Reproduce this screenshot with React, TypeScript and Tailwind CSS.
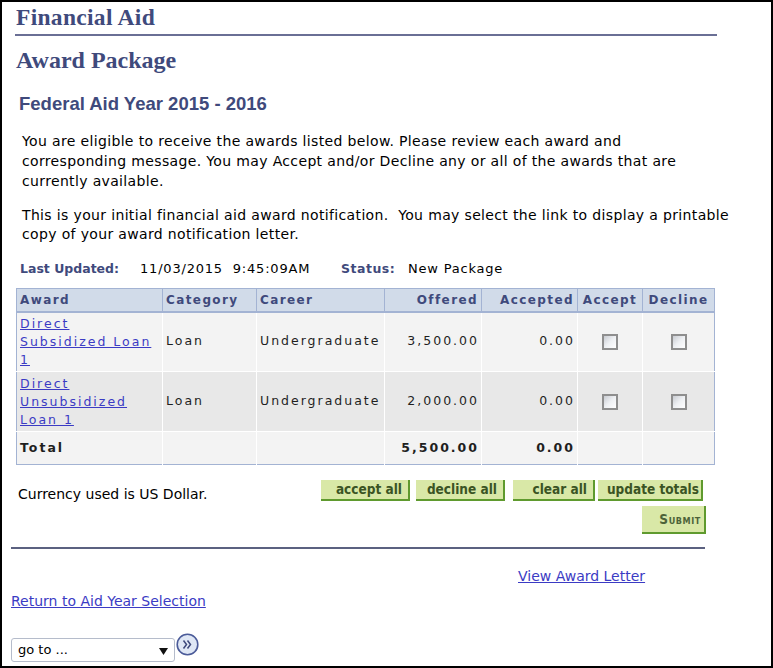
const navy = "text-[#3f4a7c]";

const body = { fontFamily: "'DejaVu Sans', Verdana, sans-serif" };
const serif = { fontFamily: "'Liberation Serif', 'Times New Roman', serif" };
const arial = { fontFamily: "'Liberation Sans', Arial, sans-serif" };
const cond = { fontFamily: "'DejaVu Sans Condensed', 'DejaVu Sans', sans-serif", fontStretch: "condensed" };

type Row = { award: string[]; offered: string; bg: string };

const rows: Row[] = [
  { award: ["Direct", "Subsidized Loan", "1"], offered: "3,500.00", bg: "bg-[#f3f3f3]" },
  { award: ["Direct", "Unsubsidized", "Loan 1"], offered: "2,000.00", bg: "bg-[#e8e8e8]" },
];

function Check() {
  return (
    <div className="mx-auto h-[16px] w-[16px] border-2 border-[#8e8e8e] bg-gradient-to-br from-[#c9ccd2] via-[#eef0f3] to-white" />
  );
}

function GreenButton({ label, w, className = "" }: { label: string; w: string; className?: string }) {
  return (
    <button
      className={`h-[21px] ${w} border-r-2 border-b-2 border-[#5f9a2e] bg-[#d9e8a7] pr-[6px] text-right text-[13.5px] font-bold leading-[19px] text-[#3b5424] ${className}`}
      style={cond}
    >
      {label}
    </button>
  );
}

export default function App() {
  return (
    <div className="h-[668px] w-[773px] overflow-hidden border-2 border-black bg-white" style={body}>
      <h1 className={`ml-[14px] mt-[3px] text-[23.5px] font-bold leading-[24px] tracking-[0.3px] ${navy}`} style={serif}>
        Financial Aid
      </h1>
      <div className="ml-[13px] mt-[5px] h-[2px] w-[702px] bg-[#6a6f95]" />
      <h2 className={`ml-[14px] mt-[10px] text-[24px] font-bold leading-[28px] ${navy}`} style={serif}>
        Award Package
      </h2>
      <h3 className={`ml-[17px] mt-[19px] text-[18.5px] font-bold leading-[22px] ${navy}`} style={arial}>
        Federal Aid Year 2015 - 2016
      </h3>

      <p className="ml-[20px] mt-[16px] whitespace-nowrap text-[14px] leading-[20px] tracking-[0.35px] text-black">
        You are eligible to receive the awards listed below. Please review each award and
        <br />
        corresponding message. You may Accept and/or Decline any or all of the awards that are
        <br />
        currently available.
      </p>
      <p className="ml-[20px] mt-[15px] whitespace-pre text-[14px] leading-[19px] tracking-[0.35px] text-black">
        {"This is your initial financial aid award notification.  You may select the link to display a printable"}
        <br />
        copy of your award notification letter.
      </p>

      <div className="ml-[18px] mt-[17px] flex text-[13px] leading-[16px]">
        <span className={`w-[120px] text-[12.5px] font-bold ${navy}`}>Last Updated:</span>
        <span className="w-[201px] whitespace-pre tracking-[0.8px] text-black">{"11/03/2015  9:45:09AM"}</span>
        <span className={`w-[67px] text-[12.5px] font-bold tracking-[0.5px] ${navy}`}>Status:</span>
        <span className="tracking-[0.8px] text-black">New Package</span>
      </div>

      <table className="ml-[14px] mt-[11px] w-[698px] table-fixed border-collapse border border-[#a3b3d3] text-[12.5px]">
        <colgroup>
          <col className="w-[146px]" />
          <col className="w-[94px]" />
          <col className="w-[128px]" />
          <col className="w-[97px]" />
          <col className="w-[96px]" />
          <col className="w-[65px]" />
          <col className="w-[72px]" />
        </colgroup>
        <thead>
          <tr className={`h-[23px] border-b-2 border-[#a3b3d3] bg-[#d1dbe9] text-[12px] font-bold tracking-[1.4px] ${navy}`}>
            <th className="border-r border-[#a3b3d3] px-[3px] text-left">Award</th>
            <th className="border-r border-[#a3b3d3] px-[3px] text-left">Category</th>
            <th className="border-r border-[#a3b3d3] px-[3px] text-left">Career</th>
            <th className="border-r border-[#a3b3d3] px-[3px] text-right">Offered</th>
            <th className="border-r border-[#a3b3d3] px-[3px] text-right">Accepted</th>
            <th className="border-r border-[#a3b3d3] px-0 text-center">Accept</th>
            <th className="px-0 text-center">Decline</th>
          </tr>
        </thead>
        <tbody className="tracking-[2px] text-[#1f1f1f]">
          {rows.map((r) => (
            <tr key={r.offered} className={`h-[60px] border-b border-white ${r.bg}`}>
              <td className="border-r border-white px-[3px] leading-[18px]">
                <a href="#" className="text-[#3b3bc4] underline">
                  {r.award.map((l, i) => (
                    <span key={i} className="block whitespace-nowrap">{l}</span>
                  ))}
                </a>
              </td>
              <td className="border-r border-white px-[3px]">Loan</td>
              <td className="border-r border-white px-[3px]">Undergraduate</td>
              <td className="border-r border-white pl-[3px] pr-[2px] text-right">{r.offered}</td>
              <td className="border-r border-white pl-[3px] pr-[2px] text-right">0.00</td>
              <td className="border-r border-white">
                <Check />
              </td>
              <td>
                <Check />
              </td>
            </tr>
          ))}
          <tr className="h-[33px] bg-[#f3f3f3] font-bold">
            <td className="border-r border-white px-[3px]">Total</td>
            <td className="border-r border-white" />
            <td className="border-r border-white" />
            <td className="border-r border-white pl-[3px] pr-[2px] text-right">5,500.00</td>
            <td className="border-r border-white pl-[3px] pr-[2px] text-right">0.00</td>
            <td className="border-r border-white" />
            <td />
          </tr>
        </tbody>
      </table>

      <div className="ml-[14px] mt-[15px] flex w-[687px] items-start justify-between">
        <span className="ml-[2px] mt-[6px] text-[14px] leading-[16px] text-black">Currency used is US Dollar.</span>
        <div className="flex flex-col items-end">
          <div className="flex">
            <GreenButton label="accept all" w="w-[89px]" />
            <GreenButton label="decline all" w="w-[89px]" className="ml-[6px]" />
            <GreenButton label="clear all" w="w-[82px]" className="ml-[8px]" />
            <GreenButton label="update totals" w="w-[105px]" className="ml-[3px] !pr-[2px]" />
          </div>
          <button
            className="mt-[5px] mr-[-3px] h-[28px] w-[64px] border-r-2 border-b-2 border-[#5f9a2e] bg-[#d9e8a7] pr-[3px] text-right text-[13.5px] font-bold tracking-[0.6px] text-[#4d6339]"
            style={{ ...cond, fontVariant: "small-caps" }}
          >
            Submit
          </button>
        </div>
      </div>

      <div className="ml-[9px] mt-[13px] h-[2px] w-[694px] bg-[#5b6180]" />

      <div className="ml-[516px] mt-[19px] text-[14px] leading-[16px]">
        <a href="#" className="text-[#3b3bc4] underline">View Award Letter</a>
      </div>
      <div className="ml-[9px] mt-[9px] text-[14px] leading-[16px]">
        <a href="#" className="text-[#3b3bc4] underline">Return to Aid Year Selection</a>
      </div>

      <div className="ml-[9px] mt-[16px] flex items-start">
        <div className="mt-[13px] flex h-[24px] w-[164px] items-center justify-between rounded-[3px] border border-[#b5bccb] bg-white pl-[6px] pr-[6px] text-[13px] text-black">
          <span>go to ...</span>
          <svg width="9" height="7" viewBox="0 0 9 7" className="mt-[3px]">
            <path d="M0 0 H9 L4.5 7 Z" fill="#111" />
          </svg>
        </div>
        <svg width="23" height="23" viewBox="0 0 23 23" className="mt-[8px] ml-px">
          <circle cx="11.5" cy="11.5" r="10.3" fill="#dfe7f5" stroke="#4b5b99" strokeWidth="1.6" />
          <path d="M7.5 7.5 L10.5 11.5 L7.5 15.5 M11.5 7.5 L14.5 11.5 L11.5 15.5" fill="none" stroke="#3f4a7c" strokeWidth="1.5" />
        </svg>
      </div>
    </div>
  );
}
